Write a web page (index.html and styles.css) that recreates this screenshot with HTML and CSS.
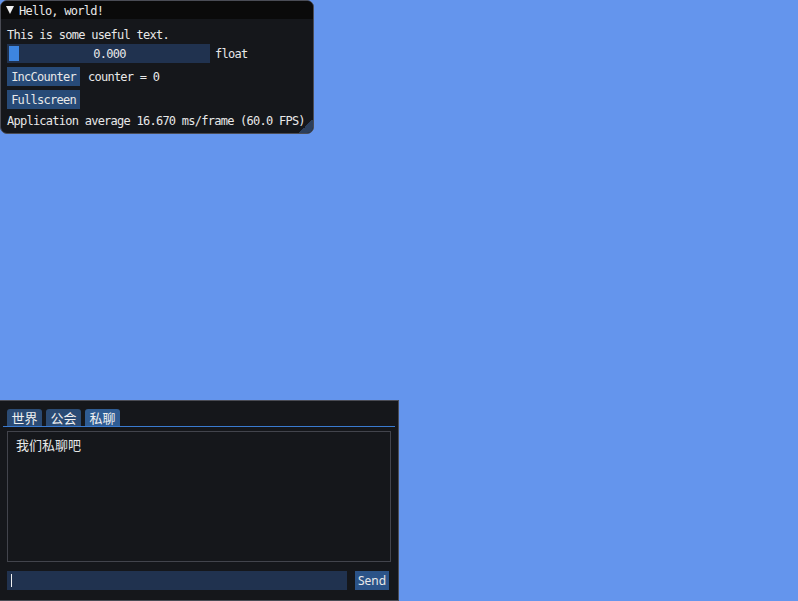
FILE: index.html
```html
<!DOCTYPE html>
<html>
<head>
<meta charset="utf-8">
<link rel="stylesheet" href="styles.css">
</head>
<body>
<div class="win hello">
  <div class="titlebar"><span class="arrow"></span><span class="title">Hello, world!</span></div>
  <div class="content">
    <div class="line">This is some useful text.</div>
    <div class="row">
      <div class="slider"><span class="grab"></span><span class="sval">0.000</span></div>
      <span class="label">float</span>
    </div>
    <div class="row">
      <div class="btn">IncCounter</div>
      <span class="label">counter = 0</span>
    </div>
    <div class="row">
      <div class="btn">Fullscreen</div>
    </div>
    <div class="line">Application average 16.670 ms/frame (60.0 FPS)</div>
  </div>
  <span class="grip"></span>
</div>

<div class="win chat">
  <div class="tabs">
    <div class="tab cjk">世界</div>
    <div class="tab cjk">公会</div>
    <div class="tab active cjk">私聊</div>
  </div>
  <div class="tabline"></div>
  <div class="child"><div class="msg cjk">我们私聊吧</div></div>
  <div class="inputrow">
    <div class="input"><span class="caret"></span></div>
    <div class="btn send">Send</div>
  </div>
</div>
</body>
</html>
```

FILE: styles.css
```css
html, body {
  margin: 0;
  padding: 0;
  width: 798px;
  height: 601px;
  overflow: hidden;
  background: #6495ed;
}
body {
  position: relative;
  font-family: "DejaVu Sans Mono", "Liberation Mono", "Noto Sans CJK SC", monospace;
  font-size: 12px;
  letter-spacing: -0.75px;
  color: #e8e8e8;
}
.cjk {
  font-family: "Noto Sans CJK SC", sans-serif;
  font-size: 13px;
  letter-spacing: 0;
}
.win {
  position: absolute;
  box-sizing: border-box;
  background: #15171b;
  border: 1px solid #4a4c55;
}
.hello {
  left: 0;
  top: 0;
  width: 314px;
  height: 134px;
  border-radius: 7px;
  overflow: hidden;
}
.titlebar {
  height: 18px;
  background: #0a0a0a;
  display: flex;
  align-items: center;
  padding-left: 5px;
  gap: 5px;
}
.arrow {
  width: 0;
  height: 0;
  border-left: 4.5px solid transparent;
  border-right: 4.5px solid transparent;
  border-top: 8px solid #f0f0f0;
  margin-top: 0;
}
.title {
  line-height: 13px;
  margin-top: 2px;
}
.content {
  padding: 8px 6px 6px 6px;
  display: flex;
  flex-direction: column;
  gap: 4px;
}
.line {
  height: 13px;
  line-height: 16px;
  white-space: nowrap;
}
.row {
  display: flex;
  align-items: center;
  height: 19px;
  gap: 8px;
}
.row .label {
  line-height: 13px;
  padding-top: 2px;
}
.slider {
  position: relative;
  width: 203px;
  height: 19px;
  background: #20324f;
  display: flex;
  align-items: center;
  justify-content: center;
  flex: none;
}
.grab {
  position: absolute;
  left: 2px;
  top: 2px;
  width: 10px;
  height: 15px;
  background: #3d85e0;
}
.sval {
  line-height: 13px;
  margin-left: 2px;
  padding-top: 2px;
}
.slider + .label {
  margin-left: -3px;
}
.btn {
  box-sizing: border-box;
  height: 19px;
  padding: 2px 4px 0 4px;
  background: #274a77;
  display: flex;
  align-items: center;
  line-height: 13px;
  width: 73px;
  justify-content: center;
}
.grip {
  position: absolute;
  right: 0;
  bottom: 0;
  width: 14px;
  height: 14px;
  background: linear-gradient(135deg, transparent 50%, #2b3e5b 50%);
}
.chat {
  left: 0;
  top: 400px;
  width: 399px;
  height: 201px;
  border-left: none;
  padding: 8px 7px 10px 7px;
  display: flex;
  flex-direction: column;
}
.tabs {
  display: flex;
  gap: 4px;
  height: 17px;
}
.tab {
  box-sizing: border-box;
  height: 17px;
  padding: 0 4px;
  background: #2b4b74;
  border-radius: 3px 3px 0 0;
  line-height: 17px;
  color: #f0f0f0;
  width: 35px;
  text-align: center;
}
.tab.active {
  background: #2f5c93;
}
.tabline {
  height: 1px;
  background: #3a7bd0;
  margin: 0 -4px 4px -4px;
}
.child {
  box-sizing: border-box;
  height: 131px;
  border: 1px solid #42444c;
  padding: 4px 8px;
}
.msg {
  line-height: 18px;
}
.inputrow {
  margin-top: 9px;
  display: flex;
  gap: 8px;
  height: 19px;
}
.input {
  width: 340px;
  height: 19px;
  background: #20324f;
  position: relative;
}
.caret {
  position: absolute;
  left: 4px;
  top: 3px;
  width: 1px;
  height: 13px;
  background: #f0f0f0;
}
.send {
  width: 34px;
  padding: 0 4px;
  background: #2b5388;
  font-family: "Noto Sans", "DejaVu Sans", sans-serif;
  letter-spacing: 0;
  font-size: 12px;
}
```
